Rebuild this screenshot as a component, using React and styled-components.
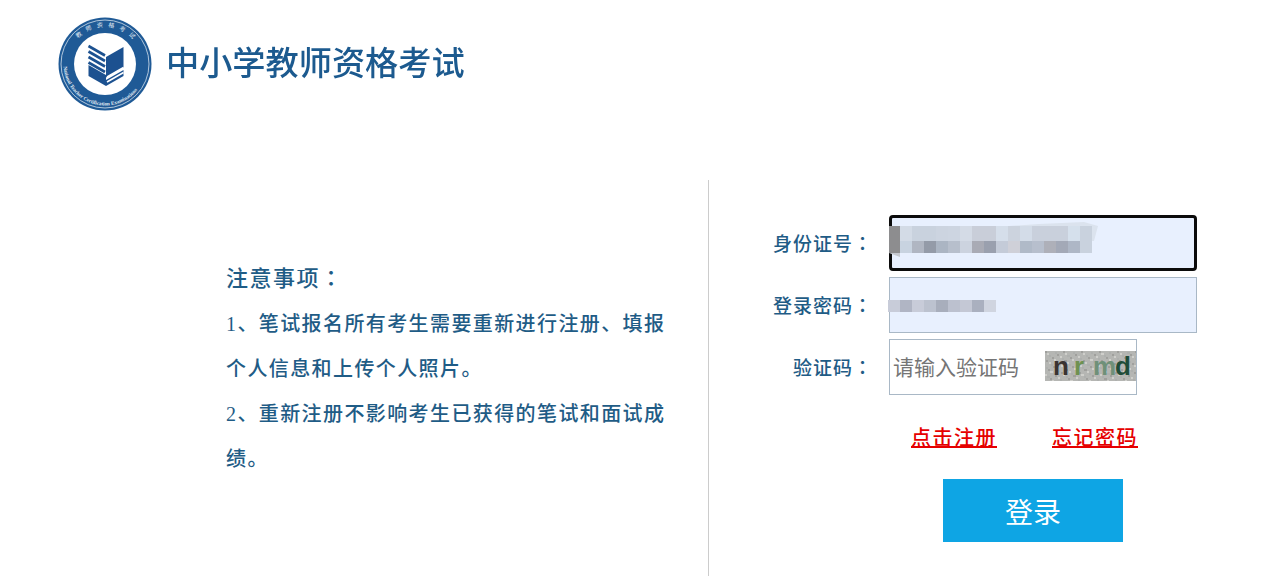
import React from "react";
import styled, { createGlobalStyle } from "styled-components";

const GlobalStyle = createGlobalStyle`
  html, body {
    margin: 0;
    padding: 0;
    background: #fff;
    overflow: hidden;
  }
`;

const SERIF = `"Liberation Serif", "Noto Sans CJK SC", serif`;
const SANS = `"Noto Sans CJK SC", "Liberation Sans", sans-serif`;

const Page = styled.div`
  width: 1285px;
  height: 576px;
  overflow: hidden;
`;

const Header = styled.header`
  height: 180px;
  box-sizing: border-box;
  padding: 10px 0 0 50px;
  display: flex;
  align-items: flex-start;
`;

const LogoTitle = styled.h1`
  margin: 21px 0 0 6px;
  font: 500 33.2px/60px ${SANS};
  color: #1c5a8f;
  white-space: nowrap;
  filter: blur(0.4px);
`;

const Main = styled.main`
  display: flex;
  height: 396px;
`;

const Notice = styled.section`
  width: 709px;
  box-sizing: border-box;
  padding: 76px 40px 0 226px;
  border-right: 1px solid #ccc;
  color: #1f5c86;
  font-family: ${SERIF};
`;

const NoticeTitle = styled.h2`
  height: 45px;
  margin: 0 0 1px;
  font-size: 22px;
  font-weight: 500;
  line-height: 45px;
  letter-spacing: 1.5px;
`;

const NoticeText = styled.p`
  margin: 0;
  font-size: 20px;
  font-weight: 500;
  line-height: 45px;
  letter-spacing: 1.4px;
`;

/* TC cut keeps the full-width colon centred in its box */
const Colon = styled.span`
  font-family: "Noto Sans CJK TC", sans-serif;
  line-height: 1;
`;

const LoginForm = styled.form`
  flex: 1;
  padding: 35px 0 0 0;
  display: flex;
  flex-direction: column;
  gap: 6px;
`;

const Row = styled.div`
  display: flex;
  align-items: center;
  height: 56px;
`;

const Label = styled.label`
  width: 180px;
  box-sizing: border-box;
  padding: 3px 16px 0 0;
  text-align: right;
  color: #1f5c86;
  font: 500 19px/24px ${SERIF};
  letter-spacing: 1px;
  white-space: nowrap;
`;

const Field = styled.div`
  width: 308px;
  height: 56px;
  box-sizing: border-box;
  background: #e8f0fe;
  border: ${(p) => (p.$focused ? "3px solid #0b0b0b" : "1px solid #a9b8c6")};
  border-radius: ${(p) => (p.$focused ? "4px" : "0")};
  position: relative;
  overflow: visible;
`;

const Masked = styled.svg`
  position: absolute;
  display: block;
  left: ${(p) => p.$left}px;
  top: ${(p) => p.$top}px;
  filter: blur(0.6px);
`;

const CaptchaBox = styled.div`
  width: 248px;
  height: 56px;
  box-sizing: border-box;
  border: 1px solid #a9b8c6;
  display: flex;
  align-items: center;
  justify-content: space-between;
  background: #fff;
`;

const CaptchaInput = styled.input`
  width: 150px;
  height: 100%;
  box-sizing: border-box;
  border: 0;
  outline: 0;
  padding: 0 0 3px 3px;
  background: transparent;
  font: 400 21px ${SANS};
  &::placeholder {
    color: #757575;
    opacity: 1;
  }
`;

const CaptchaImage = styled.svg`
  display: block;
  flex: none;
  margin-top: -2px;
`;

const Links = styled.div`
  display: flex;
  gap: 55px;
  margin: 23px 0 0 202px;
`;

const TextLink = styled.a`
  color: #e60000;
  font: 500 20px/28px ${SERIF};
  letter-spacing: 1.5px;
  text-decoration: underline;
  cursor: pointer;
`;

const SubmitButton = styled.button`
  width: 180px;
  height: 63px;
  margin: 21px 0 0 234px;
  border: 0;
  background: #0ea5e4;
  color: #fff;
  font: 400 28px ${SANS};
  cursor: pointer;
`;

const idTop = ["#d3dbe6", "#c9d2de", "#c9d2de", "#ccd4e0", "#cdd5e1", "#d4dbe6", "#c9ced9", "#c9ced9", "#d5deea", "#ccd3de", "#d3dce8", "#c9d0dc", "#c9d0dc", "#c9d0dc", "#d5e0ec", "#c9d2de"];
const idBottom = ["#c8d3e0", "#b0b6c2", "#949ba8", "#abb5c3", "#b7bfcc", "#ccd3df", "#a9abb5", "#9aa0ae", "#c4cbd8", "#cfd0d8", "#b0bac8", "#b7bfcd", "#aeb0b9", "#a3a9b7", "#aeb7c6", "#c9d2de"];
const pwdCells = ["#c8ccd9", "#b0b5c4", "#c8ccd9", "#bcc2cf", "#a8aebc", "#bcc1cf", "#c4c8d5", "#aab0bf", "#d0d5e0"];

// deterministic speckle for the captcha background
const speckle = [];
for (let i = 0; i < 170; i++) {
  const x = (i * 37) % 91;
  const y = (i * 53) % 30;
  speckle.push({ x, y, c: i % 3 === 0 ? "#a0a09d" : i % 3 === 1 ? "#cfcfcb" : "#aeb0ae" });
}

const Logo = () => (
  <svg width="110" height="105" viewBox="0 0 110 105" aria-hidden="true">
    <defs>
      <path id="ringTop" d="M 18 54 A 37 37 0 0 1 92 54" />
      <path id="ringBottom" d="M 13.5 54 A 41.5 41.5 0 0 0 96.5 54" />
    </defs>
    <circle cx="55" cy="54" r="46.5" fill="#1f5a96" />
    <circle cx="55" cy="54" r="44" fill="none" stroke="#d5e2ee" strokeWidth="0.8" />
    <circle cx="55" cy="54" r="31" fill="#fff" />
    <text fontSize="6" fill="#e4edf5" fontFamily={SANS} letterSpacing="5">
      <textPath href="#ringTop" startOffset="24%">教师资格考试</textPath>
    </text>
    <text fontSize="5.2" fill="#e4edf5" fontFamily={SERIF} fontWeight="700">
      <textPath href="#ringBottom" startOffset="2%">National Teacher Certification Examinations</textPath>
    </text>
    <path d="M56 47 L73.5 37 V57.5 L56 67.5 Z" fill="#1c5190" />
    <path d="M38.5 55 L56 65 V76 L38.5 66 Z" fill="#1c5190" />
    <path d="M56 70 L73.5 60 V66 L56 76 Z" fill="#1c5190" />
    <g stroke="#1c5190" strokeWidth="2.6" fill="none">
      <path d="M38.5 36 L55 45.5" />
      <path d="M38.5 41.5 L55 51" />
      <path d="M38.5 47 L55 56.5" />
      <path d="M38.5 52.5 L55 62" />
    </g>
    <g stroke="#fff" strokeWidth="1.6" fill="none">
      <path d="M57 72 L73.5 62.5" />
      <path d="M57 67 L73.5 57.5" />
    </g>
  </svg>
);

const Captcha = () => (
  <CaptchaImage width="91" height="30" viewBox="0 0 91 30" role="img" aria-label="captcha">
    <rect width="91" height="30" fill="#b5b6b3" />
    {speckle.map((s, i) => (
      <rect key={i} x={s.x} y={s.y} width="2" height="2" fill={s.c} />
    ))}
    <g fontFamily={`"Liberation Sans", sans-serif`} fontWeight="700" fontSize="26">
      <text x="8" y="24" fill="#3a3331">n</text>
      <text x="29" y="24" fill="#6e9150">r</text>
      <text x="48" y="24" fill="#6f9079">m</text>
      <text x="70" y="24" fill="#1f4c38">d</text>
    </g>
  </CaptchaImage>
);

export default function App() {
  return (
    <Page>
      <GlobalStyle />
      <Header>
        <Logo />
        <LogoTitle>中小学教师资格考试</LogoTitle>
      </Header>
      <Main>
        <Notice>
          <NoticeTitle>注意事项<Colon>：</Colon></NoticeTitle>
          <NoticeText>1、笔试报名所有考生需要重新进行注册、填报个人信息和上传个人照片。</NoticeText>
          <NoticeText>2、重新注册不影响考生已获得的笔试和面试成绩。</NoticeText>
        </Notice>
        <LoginForm onSubmit={(e) => e.preventDefault()}>
          <Row>
            <Label>身份证号<Colon>：</Colon></Label>
            <Field $focused>
              <Masked $left={-3} $top={3} width="220" height="38" viewBox="0 0 220 38">
                <path d="M11 5 L120 5 L150 3 L195 1 L209 5 L205 20 L11 20 Z" fill="#dbe3ee" />
                <rect x="0" y="5" width="11" height="27" fill="#8d8d8f" />
                <path d="M0 32 H11 V36 Z" fill="#c5c8cf" />
                {idTop.map((c, i) => (
                  <rect key={i} x={11 + i * 12} y="5" width="12" height="15" fill={c} />
                ))}
                {idBottom.map((c, i) => (
                  <rect key={i} x={11 + i * 12} y="20" width="12" height="12" fill={c} />
                ))}
              </Masked>
            </Field>
          </Row>
          <Row>
            <Label>登录密码<Colon>：</Colon></Label>
            <Field>
              <Masked $left={-2} $top={22} width="108" height="12" viewBox="0 0 108 12">
                {pwdCells.map((c, i) => (
                  <rect key={i} x={i * 12} y="0" width="12" height="12" fill={c} />
                ))}
              </Masked>
            </Field>
          </Row>
          <Row>
            <Label>验证码<Colon>：</Colon></Label>
            <CaptchaBox>
              <CaptchaInput placeholder="请输入验证码" readOnly />
              <Captcha />
            </CaptchaBox>
          </Row>
          <Links>
            <TextLink>点击注册</TextLink>
            <TextLink>忘记密码</TextLink>
          </Links>
          <SubmitButton type="button">登录</SubmitButton>
        </LoginForm>
      </Main>
    </Page>
  );
}
